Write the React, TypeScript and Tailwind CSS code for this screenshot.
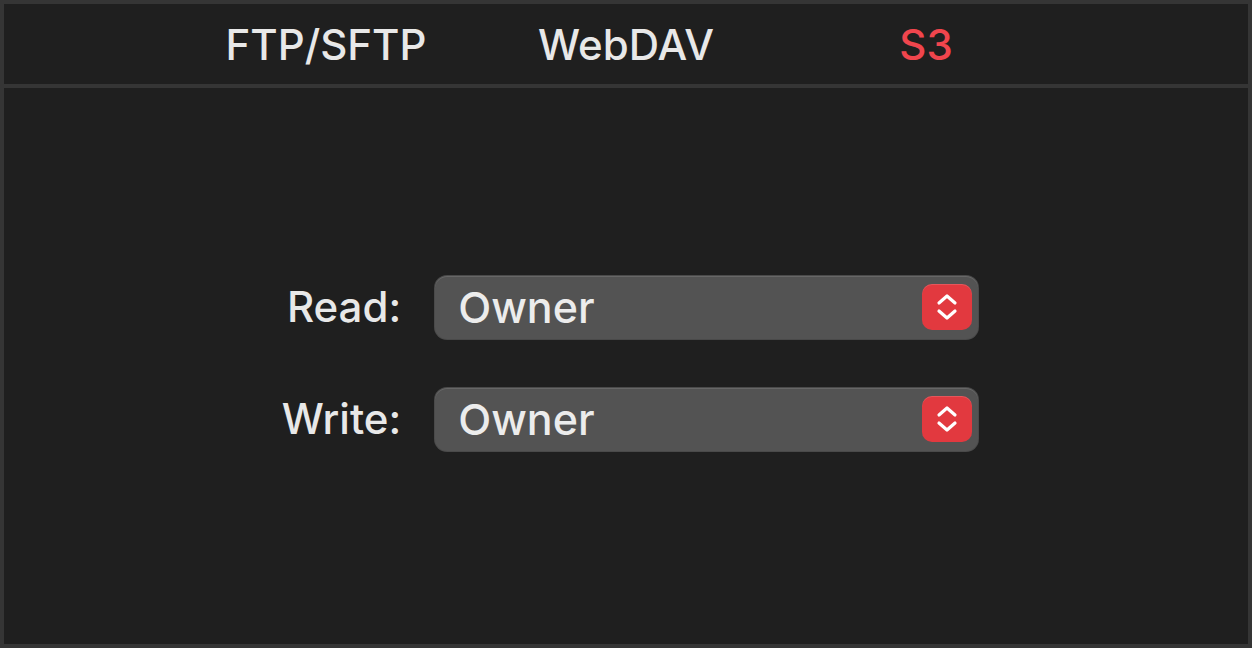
import { useState } from 'react';

const tabs = ['FTP/SFTP', 'WebDAV', 'S3'];

function Stepper() {
  return (
    <span className="flex h-[46px] w-[50px] items-center justify-center rounded-[10px] bg-[#e2393f] shadow-[inset_0_1px_0_rgba(255,255,255,0.15)]">
      <svg width="22" height="30" viewBox="0 0 22 30" fill="none" stroke="#ffffff" strokeWidth="3.2" strokeLinecap="round" strokeLinejoin="round">
        <path d="M3 11 L11 4 L19 11" />
        <path d="M3 19 L11 26 L19 19" />
      </svg>
    </span>
  );
}

function PopUp({ value }: { value: string }) {
  return (
    <div className="flex h-[63px] w-[543px] items-center justify-between rounded-[12px] bg-[#535353] pl-[23px] pr-[6px] shadow-[inset_0_1px_0_rgba(255,255,255,0.12)] ring-1 ring-[#4a4a4a]">
      <span className="text-[43px] font-medium leading-none text-[#ececec]">{value}</span>
      <Stepper />
    </div>
  );
}

export default function App() {
  const [active, setActive] = useState(2);
  const rows = [
    { label: 'Read:', value: 'Owner' },
    { label: 'Write:', value: 'Owner' },
  ];

  return (
    <div className="flex h-[648px] w-[1252px] flex-col border-[4px] border-[#353535] bg-[#1f1f1f] font-['Inter','Liberation_Sans',sans-serif]">
      <nav className="flex h-[84px] shrink-0 items-center justify-center border-b-[4px] border-[#353535] pt-[2px]">
        {tabs.map((t, i) => (
          <button
            key={t}
            onClick={() => setActive(i)}
            className={`w-[300px] text-center text-[42px] font-medium leading-none ${i === active ? 'text-[#f0454d]' : 'text-[#e8e8e8]'}`}
          >
            {t}
          </button>
        ))}
      </nav>
      <main className="flex flex-1 items-center justify-center pb-[6px] pl-[8px]">
        <div className="grid grid-cols-[auto_543px] items-center gap-x-[34px] gap-y-[49px]">
          {rows.map((r) => (
            <div key={r.label} className="contents">
              <span className="text-right text-[42px] font-medium leading-none text-[#e8e8e8]">{r.label}</span>
              <PopUp value={r.value} />
            </div>
          ))}
        </div>
      </main>
    </div>
  );
}
